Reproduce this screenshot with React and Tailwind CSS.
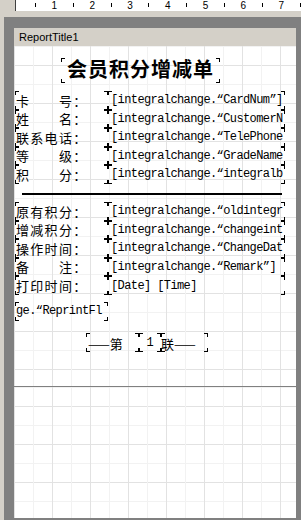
import React from "react";

const CJK = "[font-family:'Noto_Sans_CJK_SC',sans-serif]";
const MONO = "[font-family:'Liberation_Mono','Noto_Sans_CJK_SC',monospace]";

const GRID =
  "bg-white [background-image:linear-gradient(to_right,#e2e2e2_1px,transparent_1px),linear-gradient(to_right,#f2f2f2_1px,transparent_1px),linear-gradient(to_bottom,#e2e2e2_1px,transparent_1px),linear-gradient(to_bottom,#f2f2f2_1px,transparent_1px)] [background-size:38px_100%,38px_100%,100%_38px,100%_38px]";

// values are cut at the box edge in the designer, keep only what shows
const group1 = [
  ["卡　　号：", "[integralchange.“CardNum”]"],
  ["姓　　名：", "[integralchange.“CustomerN"],
  ["联系电话：", "[integralchange.“TelePhone"],
  ["等　　级：", "[integralchange.“GradeName"],
  ["积　　分：", "[integralchange.“integralb"],
];

const group2 = [
  ["原有积分：", "[integralchange.“oldintegr"],
  ["增减积分：", "[integralchange.“changeint"],
  ["操作时间：", "[integralchange.“ChangeDat"],
  ["备　　注：", "[integralchange.“Remark”]"],
  ["打印时间：", "[Date] [Time]"],
];

function Marks() {
  return (
    <>
      <span className="absolute left-0 top-0 h-1 w-1 border-l border-t border-black" />
      <span className="absolute right-0 top-0 h-1 w-1 border-r border-t border-black" />
      <span className="absolute left-0 bottom-0 h-1 w-1 border-l border-b border-black" />
      <span className="absolute right-0 bottom-0 h-1 w-1 border-r border-b border-black" />
    </>
  );
}

function Box({ className, children }) {
  return (
    <div className={`relative shrink-0 ${className}`}>
      <Marks />
      {children}
    </div>
  );
}

function Row({ label, value, height }) {
  return (
    <div className={`flex ${height}`}>
      <Box className={`w-[93px] h-full flex items-center pl-[1px] ${CJK} text-[13px] tracking-[1.3px] text-black whitespace-nowrap overflow-hidden`}>
        {label}
      </Box>
      <Box className={`w-[177px] h-full flex items-center pl-[3px] ${MONO} text-[12px] tracking-[-0.6px] text-black whitespace-pre overflow-hidden`}>
        {value}
      </Box>
    </div>
  );
}

function Ruler() {
  const nums = [1, 2, 3, 4, 5, 6, 7];
  return (
    <div className="h-[11px] flex shrink-0">
      <div className="w-[15px]" />
      <div className="w-px bg-[#404040]" />
      <div className="flex-1 bg-white flex pl-[19px]">
        {nums.map((n) => (
          <div key={n} className="flex w-[37.8px] shrink-0">
            <span className="mt-[3px] h-[4px] w-px bg-black" />
            <span className="flex-1 text-center text-[10px] leading-[10px] pt-[1px] [font-family:'Liberation_Sans',sans-serif] text-black">
              {n}
            </span>
          </div>
        ))}
        <span className="mt-[3px] h-[4px] w-px bg-black" />
      </div>
    </div>
  );
}

export default function App() {
  return (
    <div className="w-[301px] h-[520px] bg-[#d4d0c8] overflow-hidden flex flex-col">
      <Ruler />

      <div className="h-[6px] shrink-0" />

      {/* Workspace */}
      <div className="flex-1 ml-[4px] bg-[#808080] pt-[11px] pl-[10px]">
        <div className="w-[282px]">

          {/* Band header */}
          <div className="h-[18px] bg-[#d4d0c8] flex items-center pl-[5px] pt-[1px] text-[11px] [font-family:'Liberation_Sans',sans-serif] text-black">
            ReportTitle1
          </div>

          {/* Band */}
          <div className={`h-[341px] border-b border-[#808080] overflow-hidden ${GRID} [background-position:0_0,19px_0,0_19px,0_0]`}>

            <div className="pt-[12px] pl-[47px]">
              <Box className={`w-[159px] h-[25px] flex items-center justify-center pb-[3px] ${CJK} text-[20px] font-bold tracking-[1px] text-black whitespace-nowrap`}>
                会员积分增减单
              </Box>
            </div>

            <div className="mt-[8px] ml-[1px]">
              {group1.map(([l, v]) => (
                <Row key={l} label={l} value={v} height="h-[18.5px]" />
              ))}
            </div>

            <div className="mt-[9.5px] ml-[8px] w-[260px] h-[2px] bg-black" />

            <div className="mt-[7px] ml-[1px]">
              {group2.map(([l, v]) => (
                <Row key={l} label={l} value={v} height="h-[18.6px]" />
              ))}
            </div>

            <div className="mt-[7px] ml-[1px]">
              <Box className={`w-[93px] h-[19px] flex items-center pl-[1px] ${MONO} text-[12px] tracking-[-0.6px] text-black whitespace-nowrap overflow-hidden`}>
                ge.“ReprintFl
              </Box>
            </div>

            <div className="mt-[12px] ml-[72px] flex h-[19px]">
              <Box className={`w-[53px] h-full flex items-center pl-[2px] pt-[2px] ${CJK} text-[13px] text-black whitespace-nowrap`}>
                ——第
              </Box>
              <Box className={`w-[22px] h-full flex items-center justify-center pt-[2px] ${MONO} text-[12px] text-black`}>
                1
              </Box>
              <Box className={`w-[47px] h-full flex items-center pt-[2px] ${CJK} text-[13px] text-black whitespace-nowrap`}>
                联——
              </Box>
            </div>
          </div>

          {/* Free area below band */}
          <div className={`h-[131px] ${GRID} [background-position:0_0,19px_0,0_19px,0_0]`} />
        </div>
      </div>
    </div>
  );
}
